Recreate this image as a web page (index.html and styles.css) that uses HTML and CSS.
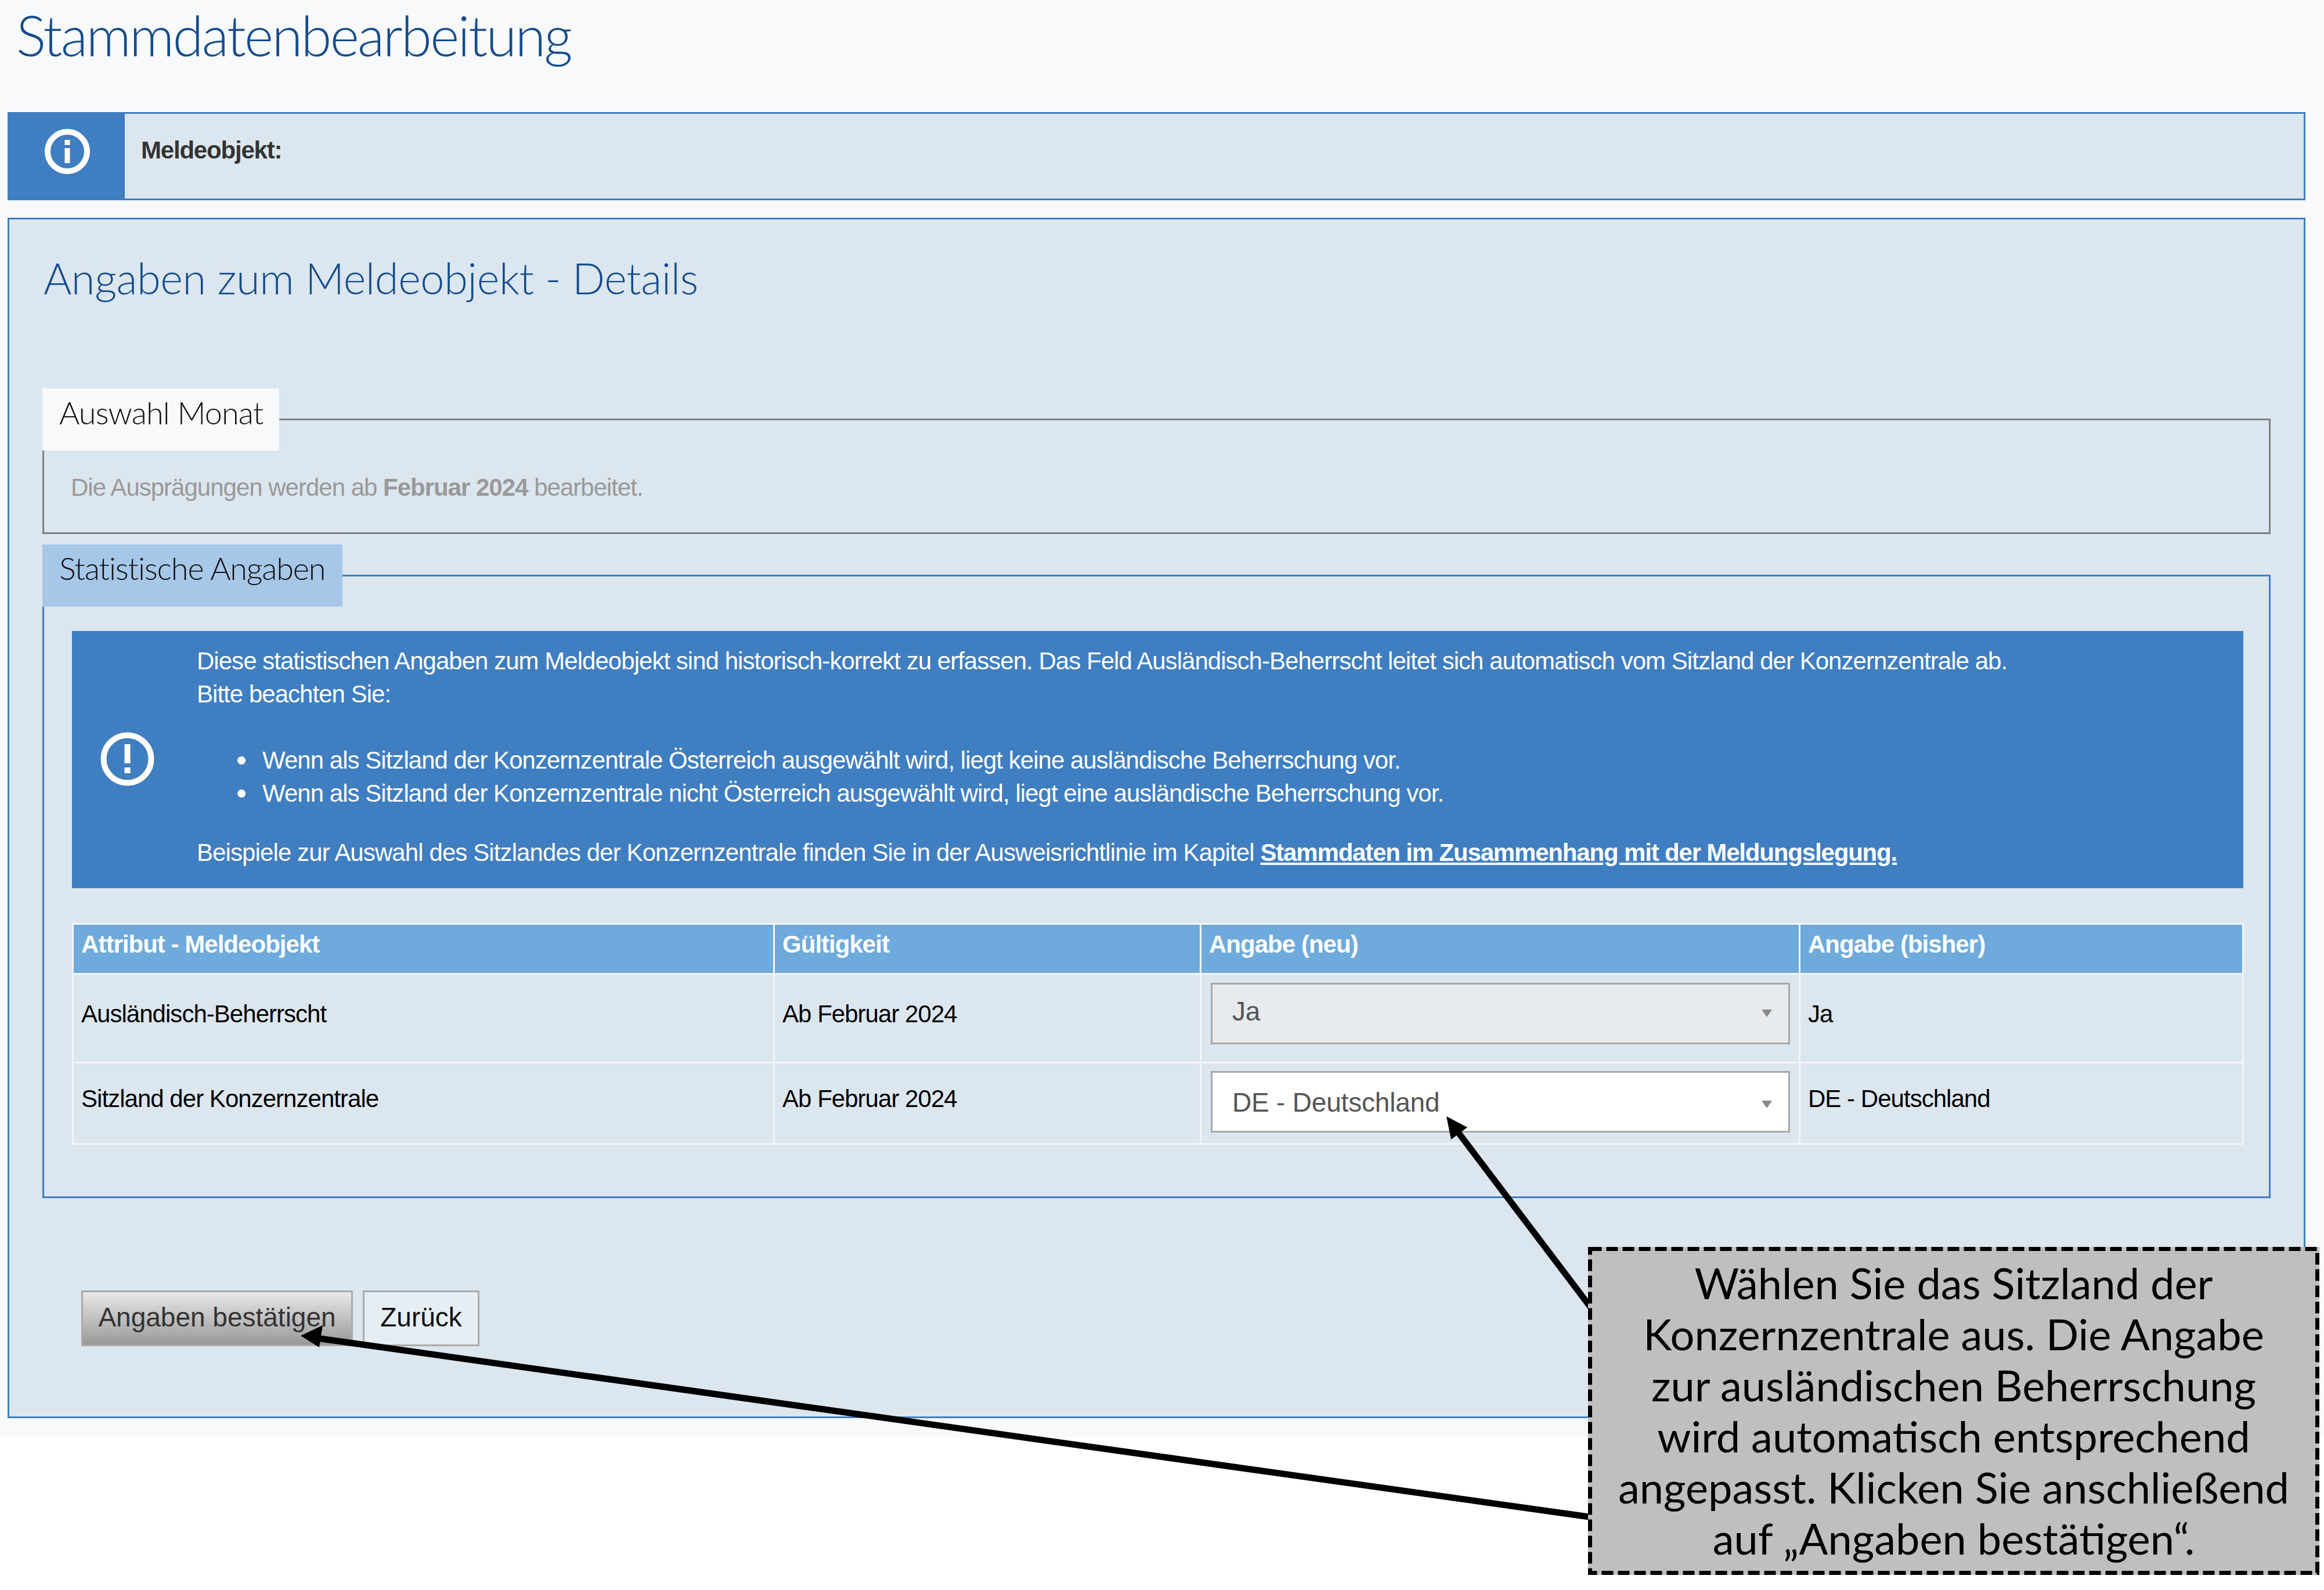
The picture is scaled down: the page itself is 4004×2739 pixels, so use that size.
FILE: index.html
```html
<!DOCTYPE html>
<html lang="de">
<head>
<meta charset="utf-8">
<title>Stammdatenbearbeitung</title>
<link rel="stylesheet" href="styles.css">
</head>
<body>
<div class="canvas">
  <div class="page">
    <h1 class="title">Stammdatenbearbeitung</h1>
    <div class="info">
      <div class="info-icon">
        <svg class="icon-info" viewBox="0 0 78 78"><circle cx="39" cy="39" r="34" fill="none" stroke="#fff" stroke-width="10"/><rect x="34.500" y="33" width="9" height="26" fill="#fff"/><rect x="34.500" y="19" width="9" height="9" fill="#fff"/></svg>
      </div>
      <div class="info-text">Meldeobjekt:</div>
    </div>
    <main class="panel">
      <h2 class="subtitle">Angaben zum Meldeobjekt - Details</h2>
      <fieldset class="group group-grey">
        <legend class="legend legend-light">Auswahl Monat</legend>
        <p class="hint">Die Ausprägungen werden ab <b>Februar 2024</b> bearbeitet.</p>
      </fieldset>
      <fieldset class="group group-blue">
        <legend class="legend legend-blue">Statistische Angaben</legend>
        <div class="alert">
          <div class="alert-icon">
            <svg class="icon-alert" viewBox="0 0 93 93"><circle cx="46.500" cy="46.500" r="41" fill="none" stroke="#fff" stroke-width="10"/><rect x="41.500" y="21" width="10" height="33" fill="#fff"/><rect x="41.500" y="61" width="10" height="10" fill="#fff"/></svg>
          </div>
          <div class="alert-body">
            <p class="alert-line">Diese statistischen Angaben zum Meldeobjekt sind historisch-korrekt zu erfassen. Das Feld Ausländisch-Beherrscht leitet sich automatisch vom Sitzland der Konzernzentrale ab.</p>
            <p class="alert-line">Bitte beachten Sie:</p>
            <ul class="alert-list">
              <li>Wenn als Sitzland der Konzernzentrale Österreich ausgewählt wird, liegt keine ausländische Beherrschung vor.</li>
              <li>Wenn als Sitzland der Konzernzentrale nicht Österreich ausgewählt wird, liegt eine ausländische Beherrschung vor.</li>
            </ul>
            <p class="alert-line alert-foot">Beispiele zur Auswahl des Sitzlandes der Konzernzentrale finden Sie in der Ausweisrichtlinie im Kapitel <a class="alert-link" href="#">Stammdaten im Zusammenhang mit der Meldungslegung.</a></p>
          </div>
        </div>
        <table class="grid">
          <colgroup><col class="c1"><col class="c2"><col class="c3"><col class="c4"></colgroup>
          <thead>
            <tr class="head-row"><th>Attribut - Meldeobjekt</th><th>Gültigkeit</th><th>Angabe (neu)</th><th>Angabe (bisher)</th></tr>
          </thead>
          <tbody>
            <tr class="row-a">
              <td>Ausländisch-Beherrscht</td><td>Ab Februar 2024</td>
              <td class="select-cell"><div class="select select-off"><span>Ja</span><i class="caret"></i></div></td>
              <td>Ja</td>
            </tr>
            <tr class="row-b">
              <td>Sitzland der Konzernzentrale</td><td>Ab Februar 2024</td>
              <td class="select-cell"><div class="select select-on"><span>DE - Deutschland</span><i class="caret"></i></div></td>
              <td>DE - Deutschland</td>
            </tr>
          </tbody>
        </table>
      </fieldset>
      <div class="actions">
        <button class="btn btn-primary" type="button">Angaben bestätigen</button>
        <button class="btn btn-plain" type="button">Zurück</button>
      </div>
    </main>
  </div>
  <svg class="arrows" viewBox="0 0 4004 2739">
    <line x1="2745" y1="2258" x2="2508" y2="1945" stroke="#000" stroke-width="11"/>
    <polygon points="2492,1923 2528,1942 2500,1963" fill="#000"/>
    <line x1="2745" y1="2614" x2="545" y2="2305" stroke="#000" stroke-width="11"/>
    <polygon points="518,2301 556,2283 550,2321" fill="#000"/>
  </svg>
  <div class="callout">
    <svg class="callout-frame" viewBox="0 0 1260 565"><rect x="3.500" y="3.500" width="1253" height="558" fill="none" stroke="#000" stroke-width="7" stroke-dasharray="20 8"/></svg>
    <p class="callout-text">Wählen Sie das Sitzland der<br>Konzernzentrale aus. Die Angabe<br>zur ausländischen Beherrschung<br>wird automatisch entsprechend<br>angepasst. Klicken Sie anschließend<br>auf „Angaben bestätigen“.</p>
  </div>
</div>
</body>
</html>
```
FILE: styles.css
```css
* { box-sizing: border-box; }
html, body { margin: 0; padding: 0; background: #fff; }
.canvas { position: relative; width: 4004px; height: 2739px; overflow: hidden; font-family: "Liberation Sans", Arial, sans-serif; }
.page { height: 2475px; background: #f8f9fb; padding: 0 32px 0 13px; }
.title { margin: 0; height: 193px; padding-left: 15px; font: 300 96px/120px Lato, sans-serif; color: #134c8c; letter-spacing: -2.700px; }
.info { display: flex; height: 152px; margin-bottom: 30px; background: #dce6ef; border: 3px solid #3f7ec1; }
.info-icon { width: 199px; background: #3f7ec1; display: flex; justify-content: center; padding: 26px 0 0 0; }
.icon-info { width: 78px; height: 78px; }
.info-text { padding: 33px 0 0 28px; font: bold 42px/60px "Liberation Sans", sans-serif; color: #333; letter-spacing: -1.200px; }
.panel { height: 2068px; background: #dce6ef; border: 3px solid #3f7ec1; padding: 56px 57px 0; }
.subtitle { margin: 0 0 145px; padding-left: 2px; font: 300 74px/90px Lato, sans-serif; color: #134c8c; letter-spacing: -.400px; }
.group { margin: 0; padding: 0; min-width: 0; }
.group-grey { border: 3px solid #808080; height: 251px; }
.group-blue { margin-top: 18px; border: 3px solid #3f7ec1; height: 1126px; }
.legend { margin: 0 0 6px -3px; padding: 0 0 0 29px; height: 107px; font: 300 54px/72px Lato, sans-serif; color: #111; }
.legend-light { width: 408px; background: #f8f9fb; padding-top: 6px; letter-spacing: -.900px; }
.legend-blue { width: 517px; background: #a6c7e8; padding-top: 5px; letter-spacing: -1.150px; }
.hint { margin: 0; padding: 28px 0 0 46px; font-size: 42px; line-height: 60px; color: #999; letter-spacing: -1px; }
.alert { display: flex; margin: 36px 44px 60px 48px; padding: 23px 0 33px; background: #3f7ec1; color: #fff; font-size: 42px; line-height: 57px; letter-spacing: -.970px; }
.alert-icon { width: 215px; flex: none; display: flex; align-items: center; padding: 8px 0 0 49px; }
.icon-alert { width: 93px; height: 93px; }
.alert-line { margin: 0; }
.alert-foot { letter-spacing: -.900px; }
.alert-list { margin: 57px 0 45px; padding: 0 0 0 113px; list-style: none; }
.alert-list li { position: relative; }
.alert-list li::before { content: "•"; position: absolute; left: -45px; top: 0; font-size: 52px; }
.alert-link { color: #fff; font-weight: bold; letter-spacing: -1.170px; }
.grid { width: 3739px; margin-left: 48px; table-layout: fixed; border-collapse: collapse; font-size: 42px; letter-spacing: -.970px; color: #000; }
.c1 { width: 1208px; } .c2 { width: 735px; } .c3 { width: 1032px; } .c4 { width: 764px; }
.grid th, .grid td { border: 3px solid #f2f5f8; padding: 0 0 0 13px; text-align: left; }
.grid th { background: #6eaadb; color: #fff; font-weight: bold; vertical-align: top; padding-top: 8px; line-height: 52px; }
.head-row { height: 86px; }
.row-a { height: 153px; }
.row-b { height: 140px; }
.row-a td { padding-bottom: 14px; }
.row-b td { padding-bottom: 15px; }
.grid .select-cell { padding: 0 0 0 16px; vertical-align: top; }
.select { display: flex; align-items: center; justify-content: space-between; width: 998px; height: 106px; margin-top: 14px; padding: 0 28px 0 34px; border: 3px solid #a9a9a9; font-size: 46px; letter-spacing: -.200px; color: #555; }
.select-off { background: #e8ebee; padding-bottom: 8px; }
.select-on { background: #fff; margin-top: 13px; padding-top: 2px; }
.caret { width: 0; height: 0; border-left: 9px solid transparent; border-right: 9px solid transparent; border-top: 13px solid #888; margin-top: 6px; }
.actions { display: flex; gap: 17px; margin-top: 159px; padding-left: 67px; }
.btn { height: 96px; padding: 0 0 4px; border: 3px solid #aaa; font: 46px "Liberation Sans", sans-serif; }
.btn-primary { width: 468px; background: linear-gradient(#e8e8e8, #999); color: #333; }
.btn-plain { width: 201px; background: #e6edf3; color: #111; }
.arrows { position: absolute; left: 0; top: 0; width: 4004px; height: 2739px; pointer-events: none; }
.callout { position: absolute; left: 2736px; top: 2148px; width: 1260px; height: 565px; background: #bfbfbf; }
.callout-frame { position: absolute; left: 0; top: 0; width: 1260px; height: 565px; }
.callout-text { position: relative; margin: 0; padding-top: 18px; font: 400 74px/88px Lato, sans-serif; color: #000; text-align: center; }
```
